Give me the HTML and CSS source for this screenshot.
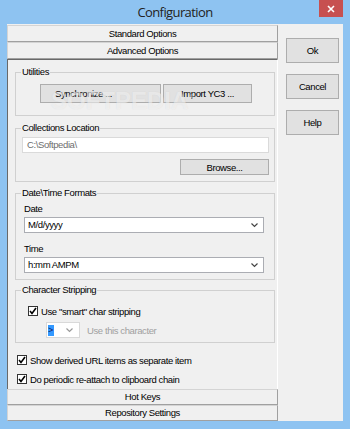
FILE: index.html
```html
<!DOCTYPE html>
<html lang="en">
  <head>
    <meta charset="UTF-8" />
    <title>Configuration</title>
    <link rel="stylesheet" href="styles.css">
  </head>
  <body>
    <div class="window">
      <div class="titlebar">
        <span class="title">Configuration</span>
        <span class="close">
          <svg width="8" height="8" viewBox="0 0 8 8"><path d="M1 1L7 7M7 1L1 7" stroke="#fff" stroke-width="1.6" /></svg>
        </span>
      </div>

      <div class="client">
        <div class="tabs">
          <div class="tab">Standard Options</div>
          <div class="tab">Advanced Options</div>

          <div class="panel">
            <fieldset class="group utilities">
              <legend>Utilities</legend>
              <div class="body">
                <button class="btn sync">Synchronize ...</button>
                <button class="btn import">Import YC3 ...</button>
              </div>
              <span class="watermark">SOFTPEDIA<sup>®</sup></span>
            </fieldset>

            <fieldset class="group collections">
              <legend>Collections Location</legend>
              <div class="body">
                <div class="edit">C:\Softpedia\</div>
                <div class="browse-row"><button class="btn browse">Browse...</button></div>
              </div>
            </fieldset>

            <fieldset class="group formats">
              <legend>Date\Time Formats</legend>
              <div class="body">
                <div class="label">Date</div>
                <div class="combo">M/d/yyyy<svg class="chev" width="7" height="5" viewBox="0 0 7 5"><path d="M0.5 0.5L3.5 3.5L6.5 0.5" fill="none" stroke="#444" stroke-width="1.2" /></svg></div>
                <div class="label second">Time</div>
                <div class="combo">h:mm AMPM<svg class="chev" width="7" height="5" viewBox="0 0 7 5"><path d="M0.5 0.5L3.5 3.5L6.5 0.5" fill="none" stroke="#444" stroke-width="1.2" /></svg></div>
              </div>
            </fieldset>

            <fieldset class="group stripping">
              <legend>Character Stripping</legend>
              <div class="body">
                <label class="check"><span class="box"><svg width="8" height="8" viewBox="0 0 8 8"><path d="M1 4L3 6.5L7 1" fill="none" stroke="#000" stroke-width="1.6" /></svg></span>Use "smart" char stripping</label>
                <div class="char-row">
                  <div class="mini-combo"><span class="sel">&gt;</span><svg class="chev" width="7" height="5" viewBox="0 0 7 5"><path d="M0.5 0.5L3.5 3.5L6.5 0.5" fill="none" stroke="#9a9a9a" stroke-width="1.2" /></svg></div>
                  <span class="muted">Use this character</span>
                </div>
              </div>
            </fieldset>

            <label class="check outer"><span class="box"><svg width="8" height="8" viewBox="0 0 8 8"><path d="M1 4L3 6.5L7 1" fill="none" stroke="#000" stroke-width="1.6" /></svg></span>Show derived URL items as separate item</label>
            <label class="check outer second"><span class="box"><svg width="8" height="8" viewBox="0 0 8 8"><path d="M1 4L3 6.5L7 1" fill="none" stroke="#000" stroke-width="1.6" /></svg></span>Do periodic re-attach to clipboard chain</label>
          </div>

          <div class="tab low">Hot Keys</div>
          <div class="tab low">Repository Settings</div>
        </div>

        <div class="side">
          <button class="btn side-btn">Ok</button>
          <button class="btn side-btn">Cancel</button>
          <button class="btn side-btn">Help</button>
        </div>
      </div>
    </div>
  </body>
</html>
```

FILE: styles.css
```css
* {
  box-sizing: border-box;
}
body {
  margin: 0;
  font-family: "Liberation Sans", Arial, sans-serif;
  font-size: 9.5px;
  letter-spacing: -0.4px;
  color: #000;
}
.window {
  width: 350px;
  height: 429px;
  padding: 0 7px 8px;
  background: #8ec3f1;
  display: flex;
  flex-direction: column;
}
.titlebar {
  position: relative;
  height: 24px;
  display: flex;
  align-items: center;
  justify-content: center;
}
.title {
  font-family: "Open Sans", sans-serif;
  font-size: 13px;
  letter-spacing: -0.6px;
  color: #222;
}
.close {
  position: absolute;
  top: 0;
  right: 0;
  width: 24px;
  height: 17px;
  background: #c75050;
  display: flex;
  align-items: center;
  justify-content: center;
}
.client {
  flex: 1;
  display: flex;
  background: #f0f0f0;
}
.tabs {
  width: 271px;
  padding-top: 1px;
  display: flex;
  flex-direction: column;
}
.tab {
  height: 17px;
  line-height: 15px;
  text-align: center;
  border: 1px solid;
  border-color: #d4d4d4 #a0a0a0 #a0a0a0 #d4d4d4;
}
.tab.low {
  height: 16px;
  line-height: 14px;
}
.panel {
  flex: 1;
  padding: 0 2px 0 7px;
  border-top: 1px solid #696969;
  border-left: 1px solid #696969;
  border-right: 1px solid #fff;
}

/* group boxes */
.group {
  position: relative;
  margin: 0;
  padding: 0;
  min-width: 0;
  border: 1px solid #d0d0d0;
}
.group legend {
  margin-left: 5px;
  padding: 0 1px;
  line-height: 12px;
}
.utilities {
  margin-top: 6px;
}
.utilities .body {
  display: flex;
  gap: 2px;
  padding: 6px 0 12px 24px;
}
.collections {
  margin-top: 6px;
}
.collections .body {
  padding: 3px 5px 6px 6px;
}
.formats {
  margin-top: 5px;
}
.formats .body {
  padding: 4px 10px 6px 8px;
}
.stripping {
  margin-top: 4px;
}
.stripping .body {
  padding: 9px 0 4px 12px;
}

/* buttons */
.btn {
  height: 19px;
  padding: 0;
  font: inherit;
  letter-spacing: inherit;
  color: #000;
  background: #e1e1e1;
  border: 1px solid #adadad;
}
.sync {
  width: 121px;
  padding-right: 34px;
}
.import {
  width: 89px;
}
.browse-row {
  display: flex;
  justify-content: flex-end;
  margin-top: 6px;
}
.browse {
  width: 89px;
  height: 16px;
}
.side {
  flex: 1;
  padding: 14px 0 0 8px;
  display: flex;
  flex-direction: column;
  gap: 11px;
}
.side-btn {
  width: 53px;
  height: 25px;
}

/* edits and combos */
.edit {
  height: 16px;
  line-height: 14px;
  padding-left: 4px;
  color: #6d6d6d;
  background: #fff;
  border: 1px solid #dadada;
}
.label {
  line-height: 12px;
}
.label.second {
  margin-top: 10px;
}
.combo {
  height: 16px;
  margin-top: 2px;
  padding: 0 5px 0 3px;
  line-height: 14px;
  background: #fff;
  border: 1px solid #abadb3;
  display: flex;
  align-items: center;
  justify-content: space-between;
}

/* check boxes */
.check {
  height: 12px;
  display: flex;
  align-items: center;
  gap: 3px;
}
.box {
  width: 10px;
  height: 10px;
  background: #fff;
  border: 1px solid #333;
  display: flex;
  align-items: center;
  justify-content: center;
}
.check.outer {
  margin: 11px 0 0 2px;
}
.check.outer.second {
  margin-top: 7px;
}
.char-row {
  margin: 5px 0 0 18px;
  display: flex;
  align-items: center;
  gap: 7px;
}
.mini-combo {
  width: 34px;
  height: 16px;
  padding: 0 6px 0 1px;
  background: #fff;
  border: 1px solid #d9d9d9;
  display: flex;
  align-items: center;
  justify-content: space-between;
}
.sel {
  width: 6px;
  height: 11px;
  line-height: 11px;
  font-size: 9px;
  color: #1a1a60;
  background: #3399ff;
}
.muted {
  color: #a0a0a0;
}

/* faint watermark over the utilities box */
.watermark {
  position: absolute;
  left: 35px;
  top: 9px;
  font-family: "Liberation Sans", sans-serif;
  font-weight: bold;
  font-size: 24px;
  letter-spacing: 0;
  color: rgba(255, 255, 255, 0.5);
  text-shadow: 0 0 1px rgba(160, 160, 160, 0.25);
  pointer-events: none;
}
.watermark sup {
  font-size: 8px;
}
```
